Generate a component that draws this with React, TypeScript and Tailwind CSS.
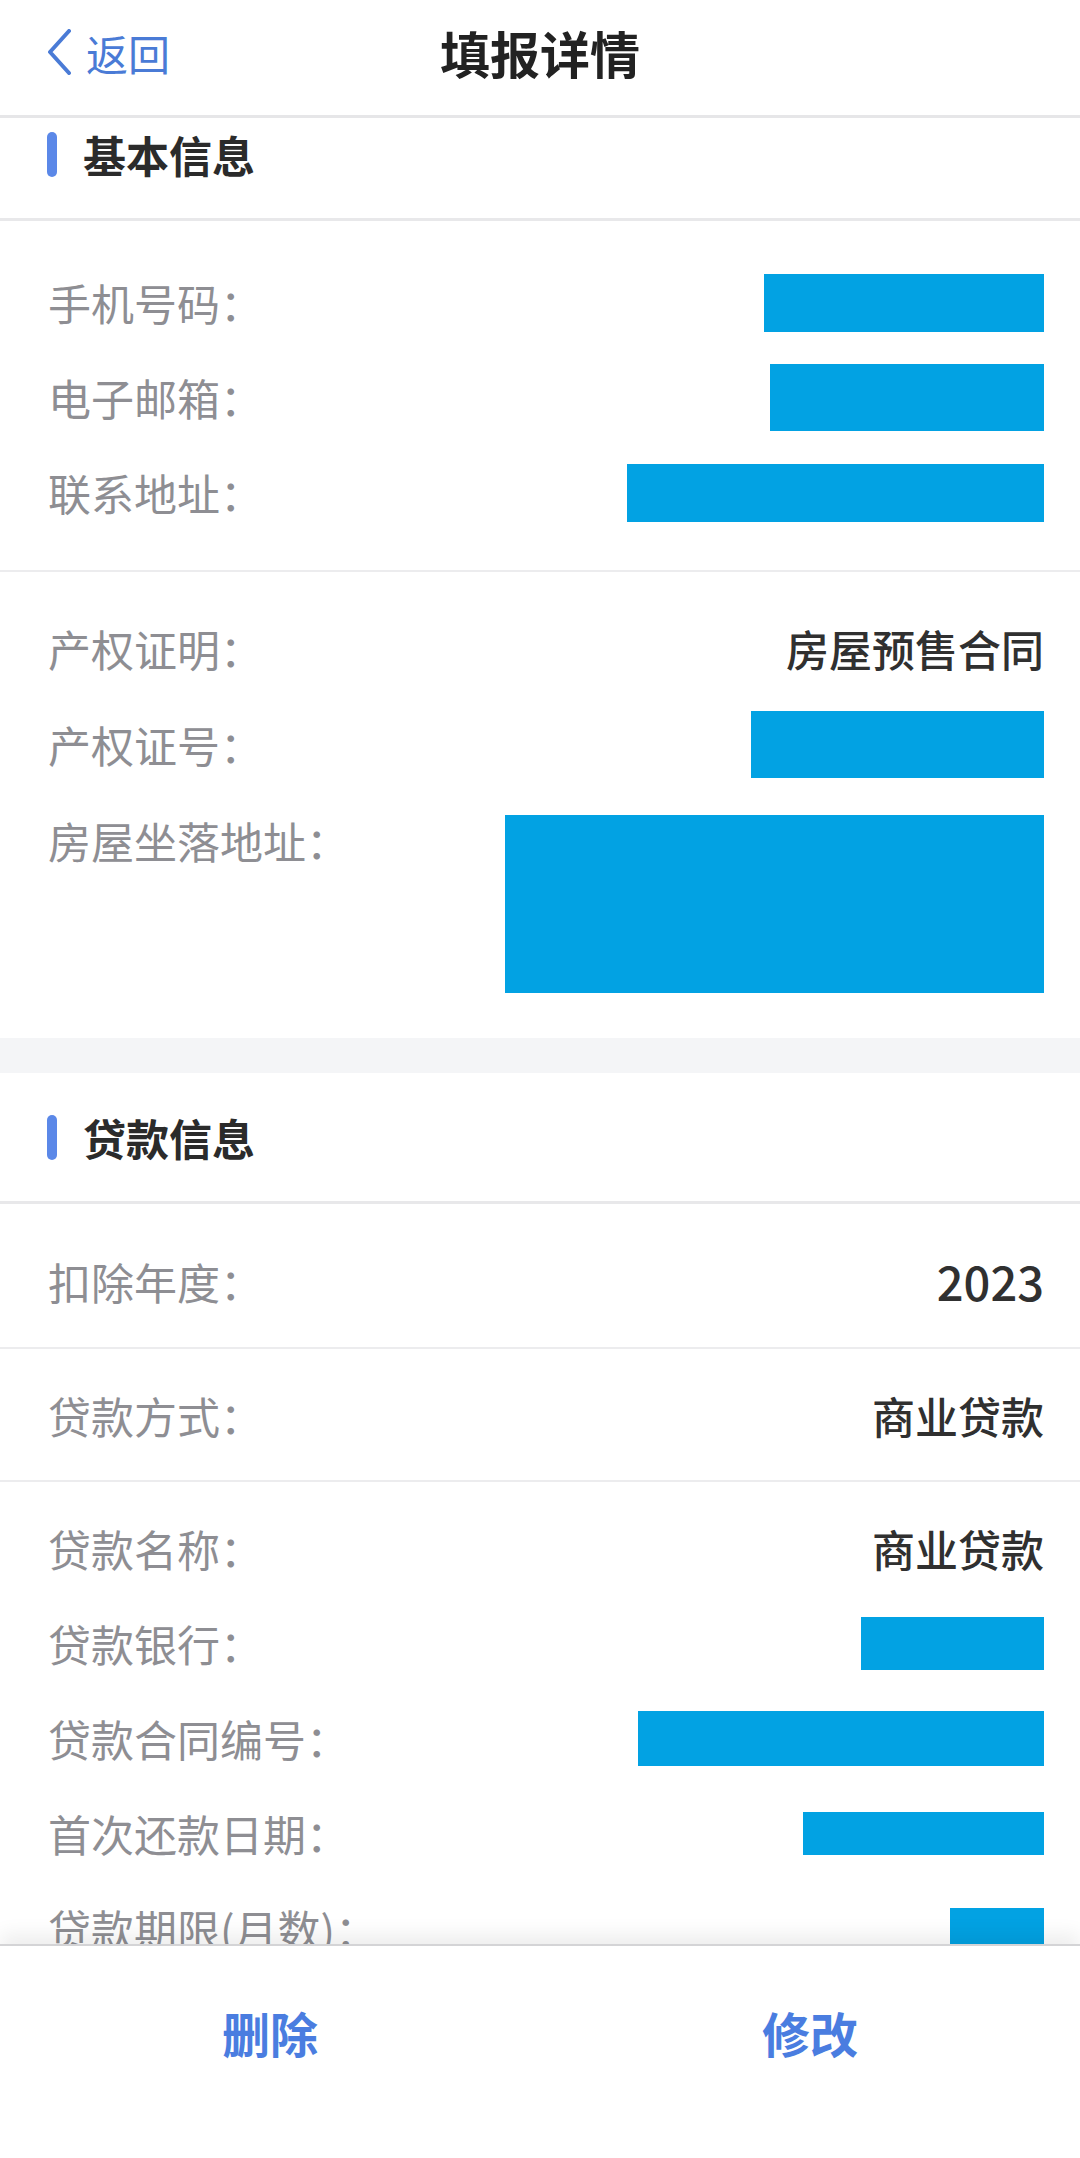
import React from "react";

type Row = {
  label: string;
  value?: string;
  mask?: { w: string; h: string };
};

const Mask = ({ w, h }: { w: string; h: string }) => (
  <div className={`${w} ${h} bg-[#02a2e3]`} />
);

const InfoRow = ({ row, height, valueSize = "text-[43px]" }: { row: Row; height: string; valueSize?: string }) => (
  <div className={`${height} flex items-center justify-between pl-[48px] pr-[36px]`}>
    <span className="text-[43px] text-[#8e8e93] whitespace-nowrap">{row.label}</span>
    {row.value && <span className={`${valueSize} font-medium text-[#303030]`}>{row.value}</span>}
    {row.mask && <Mask w={row.mask.w} h={row.mask.h} />}
  </div>
);

const SectionTitle = ({ title }: { title: string }) => (
  <div className="h-[131px] flex items-center gap-[26px] pl-[47px] border-b-[3px] border-[#e8e8ea]">
    <div className="w-[10px] h-[45px] rounded-full bg-[#5b88e8]" />
    <span className="text-[43px] font-semibold text-[#2b2b2b]">{title}</span>
  </div>
);

const App = () => {
  const contact: Row[] = [
    { label: "手机号码：", mask: { w: "w-[280px]", h: "h-[58px]" } },
    { label: "电子邮箱：", mask: { w: "w-[274px]", h: "h-[67px]" } },
    { label: "联系地址：", mask: { w: "w-[417px]", h: "h-[58px]" } },
  ];

  const loanDetail: Row[] = [
    { label: "贷款名称：", value: "商业贷款" },
    { label: "贷款银行：", mask: { w: "w-[183px]", h: "h-[53px]" } },
    { label: "贷款合同编号：", mask: { w: "w-[406px]", h: "h-[55px]" } },
    { label: "首次还款日期：", mask: { w: "w-[241px]", h: "h-[43px]" } },
    { label: "贷款期限(月数)：", mask: { w: "w-[94px]", h: "h-[42px]" } },
  ];

  return (
    <div
      className="w-[1080px] h-[2158px] flex flex-col bg-white overflow-hidden"
      style={{ fontFamily: '"Noto Sans CJK SC", "Noto Sans", sans-serif' }}
    >
      {/* nav bar */}
      <header className="h-[118px] shrink-0 grid grid-cols-[1fr_auto_1fr] items-center pb-[11px] border-b-[3px] border-[#e6e6e8]">
        <div className="flex items-center gap-[14px] pl-[47px] text-[#4a7bd6]">
          <svg width="25" height="46" viewBox="0 0 25 46" fill="none">
            <polyline
              points="22,2 3,23 22,44"
              stroke="currentColor"
              strokeWidth="4"
              strokeLinecap="round"
              strokeLinejoin="round"
            />
          </svg>
          <span className="text-[42px]">返回</span>
        </div>
        <h1 className="text-[50px] font-bold text-[#222222]">填报详情</h1>
        <div />
      </header>

      {/* scrolled content */}
      <div className="flex-1 overflow-hidden">
        <div className="-mt-[28px]">
          <SectionTitle title="基本信息" />

          <div className="pt-[34px] pb-[30px] border-b-2 border-[#ececee]">
            {contact.map((r) => (
              <InfoRow key={r.label} row={r} height="h-[95px]" />
            ))}
          </div>

          <div className="pt-[28px] pb-[45px]">
            <InfoRow row={{ label: "产权证明：", value: "房屋预售合同" }} height="h-[96px]" />
            <InfoRow row={{ label: "产权证号：", mask: { w: "w-[293px]", h: "h-[67px]" } }} height="h-[96px]" />
            <div className="flex items-start justify-between pl-[48px] pr-[36px]">
              <span className="h-[96px] flex items-center text-[43px] text-[#8e8e93]">房屋坐落地址：</span>
              <div className="mt-[23px]">
                <Mask w="w-[539px]" h="h-[178px]" />
              </div>
            </div>
          </div>

          <div className="h-[35px] bg-[#f4f5f7]" />

          <SectionTitle title="贷款信息" />

          <div className="pt-[29px] pb-[18px] border-b-2 border-[#ececee]">
            <InfoRow row={{ label: "扣除年度：", value: "2023" }} height="h-[96px]" valueSize="text-[47px]" />
          </div>

          <div className="pt-[18px] pb-[17px] border-b-2 border-[#ececee]">
            <InfoRow row={{ label: "贷款方式：", value: "商业贷款" }} height="h-[96px]" />
          </div>

          <div className="pt-[19px]">
            {loanDetail.map((r) => (
              <InfoRow key={r.label} row={r} height="h-[95px]" />
            ))}
          </div>
        </div>
      </div>

      {/* bottom actions */}
      <footer className="h-[214px] shrink-0 border-t-2 border-[#d4d4d6] shadow-[0_-10px_18px_rgba(0,0,0,0.07)] bg-white">
        <div className="h-[172px] grid grid-cols-2 items-center text-center text-[48px] font-semibold text-[#4a7de0]">
          <button>删除</button>
          <button>修改</button>
        </div>
      </footer>
    </div>
  );
};

export default App;
